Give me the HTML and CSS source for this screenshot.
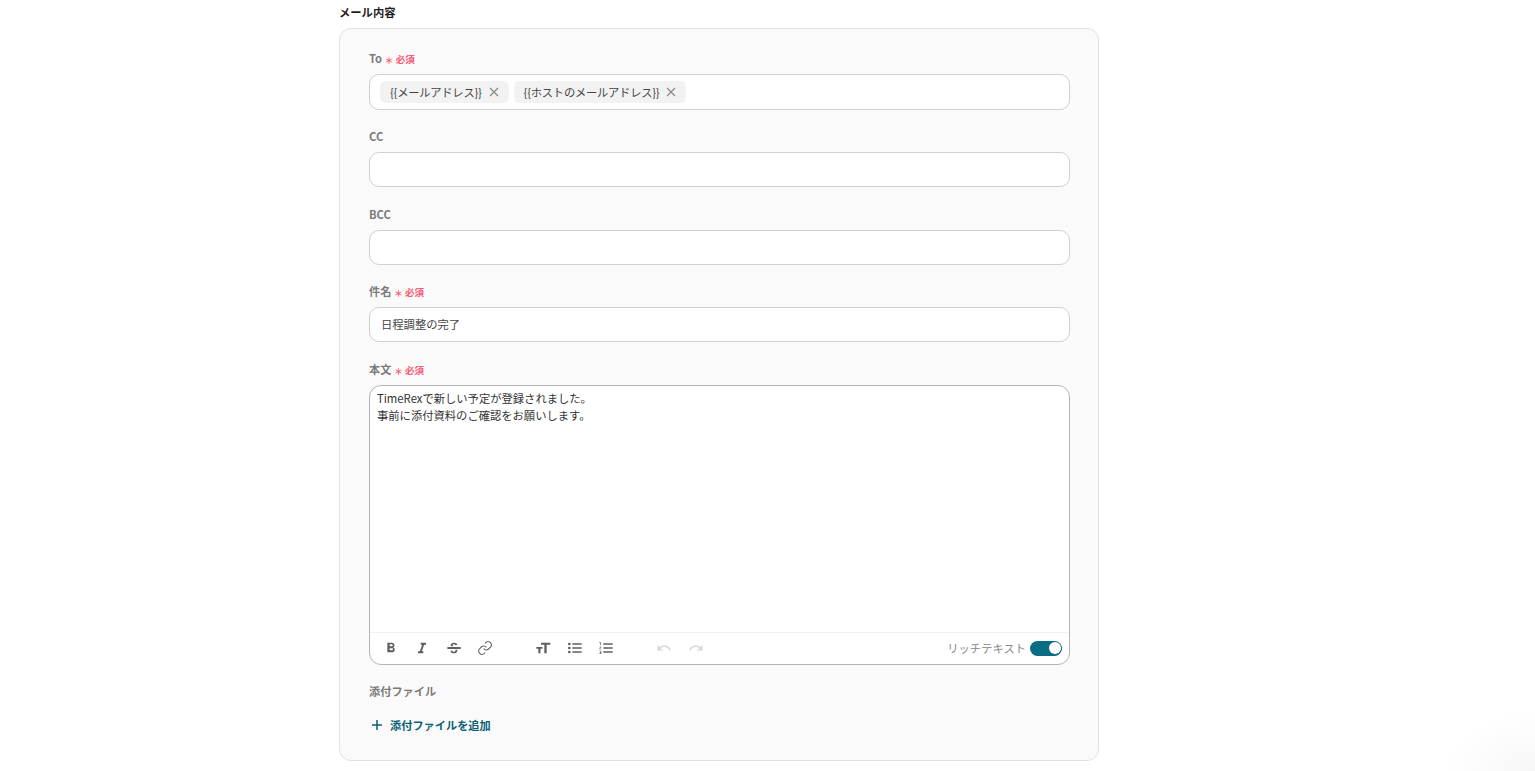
FILE: index.html
```html
<!DOCTYPE html>
<html lang="ja">
<head>
<meta charset="utf-8">
<title>メール内容</title>
<link rel="stylesheet" href="styles.css">
</head>
<body>
<main class="page">
  <h2 class="title">メール内容</h2>
  <section class="card">
    <div class="field">
      <div class="label">To <span class="req"><span class="star">＊</span>必須</span></div>
      <div class="input tags">
        <span class="tag">{{メールアドレス}}<svg class="x" viewBox="0 0 12 12"><path d="M2 2l8 8M10 2l-8 8"/></svg></span>
        <span class="tag">{{ホストのメールアドレス}}<svg class="x" viewBox="0 0 12 12"><path d="M2 2l8 8M10 2l-8 8"/></svg></span>
      </div>
    </div>
    <div class="field">
      <div class="label">CC</div>
      <div class="input"></div>
    </div>
    <div class="field">
      <div class="label">BCC</div>
      <div class="input"></div>
    </div>
    <div class="field">
      <div class="label">件名 <span class="req"><span class="star">＊</span>必須</span></div>
      <div class="input">日程調整の完了</div>
    </div>
    <div class="field">
      <div class="label">本文 <span class="req"><span class="star">＊</span>必須</span></div>
      <div class="editor">
        <div class="body-text">TimeRexで新しい予定が登録されました。<br>事前に添付資料のご確認をお願いします。</div>
        <div class="toolbar">
          <div class="group">
            <span class="tool"><svg viewBox="0 0 24 24"><path d="M15.6 10.79c.97-.67 1.65-1.77 1.65-2.79 0-2.26-1.75-4-4-4H6.500v14.500h7.540c2.090 0 3.710-1.700 3.710-3.790 0-1.520-.86-2.820-2.150-3.420zM10 6.500h3c.83 0 1.500.67 1.500 1.500s-.67 1.500-1.500 1.500h-3v-3zm3.500 9H10v-3h3.500c.83 0 1.500.67 1.500 1.500s-.67 1.500-1.500 1.500z"/></svg></span>
            <span class="tool"><svg viewBox="0 0 24 24"><path d="M10 4v3h2.210l-3.420 10H6v3h8v-3h-2.210l3.420-10H18V4z"/></svg></span>
            <span class="tool"><svg viewBox="0 0 24 24"><path d="M2 10.500h20v3H2zM7.500 9.500C7.200 9 7 8.400 7 7.800 7 5.600 9.200 4 12 4c2.600 0 4.700 1.300 5 3.500h-3c-.2-.8-1-1.200-2-1.200-1.100 0-2 .6-2 1.500 0 .6.300 1.200 1 1.700zM17 14.500c0 .2.100.5.100.8 0 2.700-2.300 4.700-5.100 4.700-3 0-5.200-1.500-5.500-4h3c.3 1 1.200 1.600 2.500 1.600 1.200 0 2.200-.7 2.200-1.900 0-.4-.1-.8-.3-1.200z"/></svg></span>
            <span class="tool"><svg viewBox="0 0 24 24" class="line"><path d="M10 13a5 5 0 0 0 7.500.5l3-3a5 5 0 0 0-7-7l-1.700 1.700"/><path d="M14 11a5 5 0 0 0-7.500-.5l-3 3a5 5 0 0 0 7 7l1.700-1.700"/></svg></span>
          </div>
          <div class="group">
            <span class="tool"><svg viewBox="0 0 24 24"><path d="M9 4v3.200h5V20h3.500V7.200H23V4zM2 10.500v2.700h3V20h3.200v-6.800h3v-2.700z"/></svg></span>
            <span class="tool"><svg viewBox="0 0 24 24"><path d="M8 5h14v2H8zM8 11h14v2H8zM8 17h14v2H8z"/><circle cx="3.500" cy="6" r="2"/><circle cx="3.500" cy="12" r="2"/><circle cx="3.500" cy="18" r="2"/></svg></span>
            <span class="tool"><svg viewBox="0 0 24 24"><path d="M8 5h14v2H8zM8 11h14v2H8zM8 17h14v2H8zM2 3h2v5H3V4H2zM2 10h3v1l-2 2h2v1H2v-1l2-2H2zM2 16h3v5H2v-1h2v-1H3v-1h1v-1H2z"/></svg></span>
          </div>
          <div class="group muted">
            <span class="tool"><svg viewBox="0 0 24 24"><path d="M12.500 8c-2.650 0-5.050.99-6.900 2.600L2 7v9h9l-3.620-3.620c1.390-1.160 3.160-1.880 5.120-1.880 3.540 0 6.550 2.310 7.600 5.500l2.370-.78C21.080 11.030 17.150 8 12.500 8z"/></svg></span>
            <span class="tool"><svg viewBox="0 0 24 24"><path d="M18.400 10.600C16.550 8.990 14.150 8 11.500 8c-4.650 0-8.580 3.030-9.960 7.220L3.900 16c1.050-3.190 4.050-5.500 7.600-5.500 1.950 0 3.730.72 5.120 1.880L13 16h9V7z"/></svg></span>
          </div>
          <div class="rich">
            <span>リッチテキスト</span>
            <span class="switch"><span class="knob"></span></span>
          </div>
        </div>
      </div>
    </div>
    <div class="field attach">
      <div class="label">添付ファイル</div>
      <div class="add"><svg viewBox="0 0 12 12"><path d="M6 1v10M1 6h10"/></svg>添付ファイルを追加</div>
    </div>
  </section>
</main>
<div class="corner-glow"></div>
</body>
</html>
```
FILE: styles.css
```css
* { box-sizing: border-box; }
html, body { margin: 0; height: 771px; overflow: hidden; background: #fff; }
body { font-family: "Noto Sans CJK JP", "Noto Sans", sans-serif; color: #333; font-size: 11.300px; }
.page { width: 760px; margin-left: 339px; }
.title { margin: 0; height: 28px; font-size: 11.300px; font-weight: 700; line-height: 25px; color: #1f1f1f; }
.card { height: 733px; padding: 22px 28px 0 29px; background: #fafafa; border: 1px solid #e2e2e2; border-radius: 12px; }
.field { margin-bottom: 19.600px; }
.label { height: 15px; margin-bottom: 8px; font-size: 11.200px; line-height: 15px; font-weight: 700; color: #7a7a7a; }
.req { color: #fb5a75; font-size: 9.500px; }
.star { font-size: 9px; margin-right: 2px; vertical-align: -1px; }
.input { height: 35px; padding: 0 11px; line-height: 32px; background: #fff; border: 1px solid #cfcfd6; border-radius: 10px; color: #444; }
.tags { display: flex; align-items: center; gap: 5px; height: 35.600px; padding: 0 10px; }
.tag { display: flex; align-items: center; height: 22px; padding: 0 10px; background: #f2f2f2; border-radius: 6px; line-height: 22px; color: #444; letter-spacing: -0.250px; }
.x { width: 12px; height: 12px; margin-left: 6px; margin-right: -1px; fill: none; stroke: #888; stroke-width: 1.200; }
.editor { height: 280px; background: #fff; border: 1px solid #b4b4b4; border-radius: 12px; display: flex; flex-direction: column; }
.body-text { flex: 1; padding: 4px 7px; line-height: 17px; font-size: 11.300px; color: #333; }
.toolbar { height: 32px; display: flex; align-items: center; padding-left: 5px; padding-right: 7px; border-top: 1px solid #f1f1f1; gap: 26.500px; }
.group { display: flex; }
.tool { width: 31.500px; display: flex; justify-content: center; }
.tool svg { width: 16px; height: 16px; fill: #5f5f5f; }
.tool svg.line { fill: none; stroke: #666; stroke-width: 1.600; }
.muted .tool svg { fill: #dcdcdc; }
.rich { margin-left: auto; display: flex; align-items: center; gap: 4px; color: #888; font-size: 11.300px; }
.switch { width: 32px; height: 15px; border-radius: 8px; background: #0a6c85; display: flex; justify-content: flex-end; align-items: center; padding-right: 1.500px; }
.knob { width: 12px; height: 12px; border-radius: 50%; background: #fff; }
.attach .label { margin-bottom: 18px; margin-top: -1px; }
.add { display: flex; align-items: center; gap: 7px; padding-left: 2px; font-size: 11.200px; font-weight: 700; color: #0a5f75; line-height: 16px; }
.add svg { width: 12px; height: 12px; fill: none; stroke: #0a5f75; stroke-width: 1.500; }
.corner-glow { position: fixed; right: 0; bottom: 0; width: 90px; height: 60px; background: radial-gradient(ellipse at 100% 100%, #f7f7f7, #fff 70%); }
```
